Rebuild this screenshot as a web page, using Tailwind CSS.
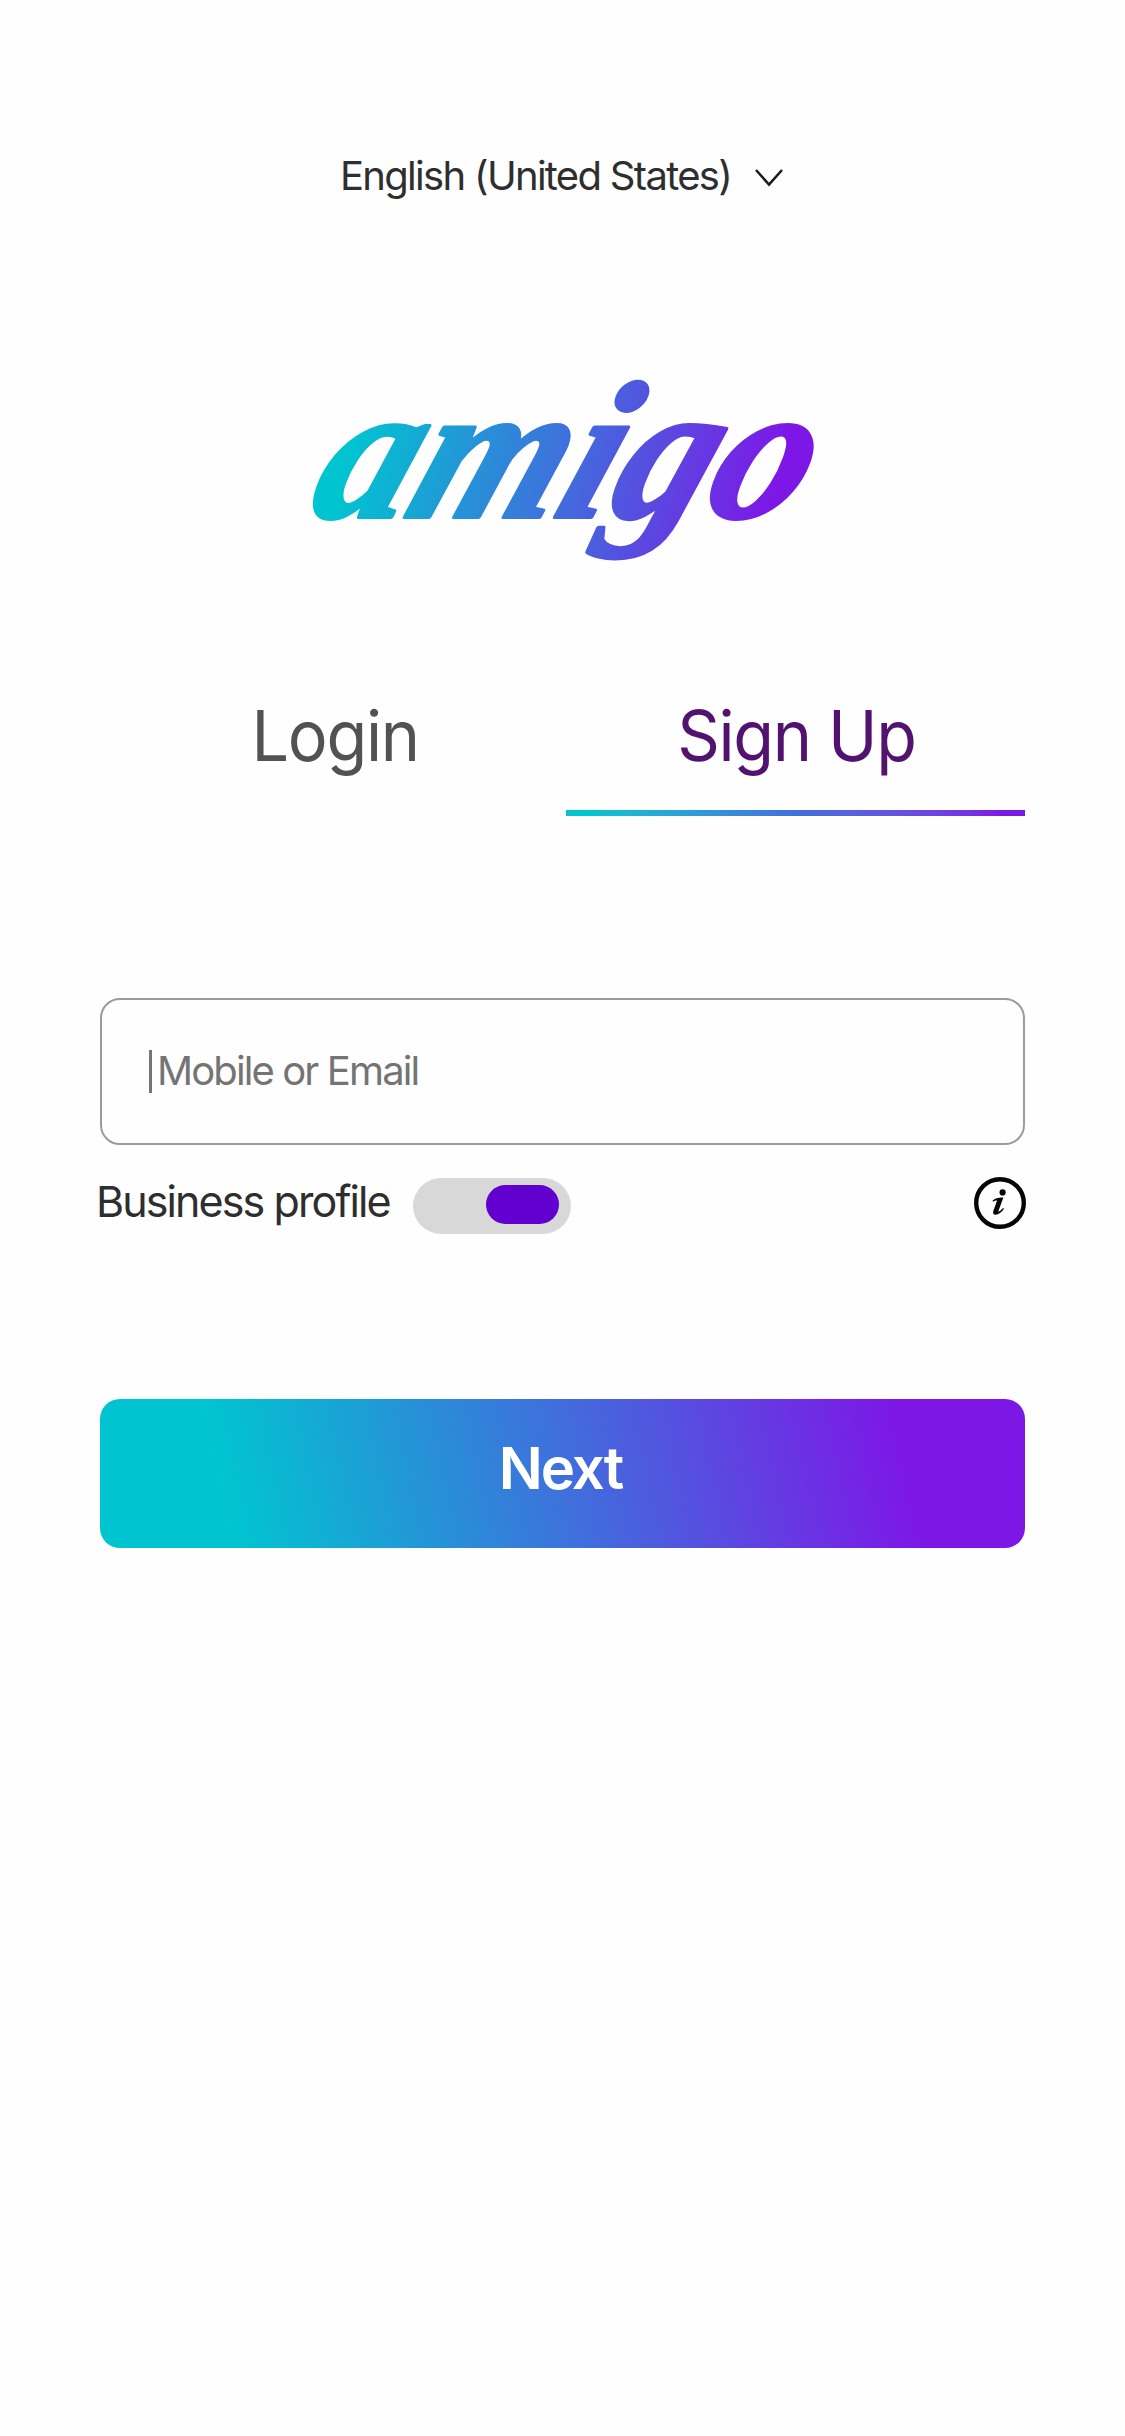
<!DOCTYPE html>
<html lang="en">
<head>
<meta charset="utf-8">
<title>amigo – Sign Up</title>
<script src="https://cdn.jsdelivr.net/npm/@tailwindcss/browser@4"></script>
</head>
<body class="bg-[#fefefe]">
<main class="w-[1125px] h-[2436px] flex flex-col px-[100px] pt-[150px] font-[Inter,sans-serif] text-[#2e2e2e]">
  <button class="self-start ml-[240px] h-[51px] flex items-center whitespace-nowrap">
    <span class="w-[415px] text-left text-[40px] leading-[51px] tracking-[-1.7px]">English (United States)</span>
    <svg class="w-[28px] h-[18px] mt-[5px]" viewBox="0 0 28 18" fill="none" stroke="#1c1c1c" stroke-width="2.6"><path d="M1 1 L14 15.5 L27 1"/></svg>
  </button>

  <svg class="self-start ml-[200px] mt-[179px] w-[530px] h-[220px] overflow-visible" viewBox="0 0 530 220" role="img" aria-label="amigo">
    <defs>
      <linearGradient id="brand" gradientUnits="userSpaceOnUse" x1="52" y1="150" x2="542" y2="80">
        <stop offset="0.06" stop-color="#00c5d0"/>
        <stop offset="0.5" stop-color="#3f70dc"/>
        <stop offset="0.94" stop-color="#7d17e6"/>
      </linearGradient>
    </defs>
    <text x="55" y="137" transform="skewX(-20)" textLength="490" lengthAdjust="spacingAndGlyphs" font-family="Liberation Serif, serif" font-style="italic" font-weight="700" font-size="195" fill="url(#brand)" stroke="url(#brand)" stroke-width="4" stroke-linejoin="round">amigo</text>
  </svg>

  <nav class="mt-[90px] h-[126px] grid grid-cols-[459px_459px] gap-[7px] text-[70px] leading-[91px] text-center whitespace-nowrap">
    <a class="block pl-[12px] text-[#525252] tracking-[-1.3px]"><span class="inline-block scale-x-95">Login</span></a>
    <a class="flex flex-col justify-between text-[#51136f] tracking-[-1.4px]"><span class="inline-block pl-[2px] scale-x-95">Sign Up</span><span class="block h-[6px] bg-linear-to-r from-[#00c5d0] from-5% via-[#3f70dc] via-50% to-[#7d17e6] to-95%"></span></a>
  </nav>

  <div class="mt-[182px] h-[147px] flex items-center rounded-[20px] border-2 border-[#9b9b9b] px-[47px] pb-px text-[#747474]">
    <span class="w-[3px] h-[43px] bg-[#747474]"></span>
    <span class="ml-[5px] -mt-px text-[40px] leading-[48px] tracking-[-1.9px]">Mobile or Email</span>
  </div>

  <div class="mt-[32px] h-[57px] -ml-[4px] -mr-px flex items-start">
    <span class="w-[317px] text-[43px] leading-[49px] tracking-[-1.9px] whitespace-nowrap">Business profile</span>
    <span class="w-[158px] h-[56px] mt-px rounded-[28px] bg-[#d8d8d8] flex justify-end pr-[12px] pt-[7px]"><span class="w-[73px] h-[39px] rounded-[20px] bg-[#6200d0]"></span></span>
    <svg class="ml-auto w-[52px] h-[52px]" viewBox="0 0 52 52"><circle cx="26" cy="26" r="23.8" fill="none" stroke="#050505" stroke-width="4.4"/><circle cx="28.6" cy="15.4" r="3.1" fill="#050505"/><path d="M18.5 23.8 C21 21 23.5 20.6 29.4 20.4 L24.2 34.6 C25.5 34.5 27.5 32.8 29 31 L30 31.8 C27.5 35.3 24.6 37.8 21.6 37.8 C19.2 37.8 18.6 36 19.4 33.8 L23 23.8 C22 23.3 20.6 23.8 19.2 24.8 Z" fill="#050505"/></svg>
  </div>

  <button class="mt-[165px] h-[149px] rounded-[20px] bg-[linear-gradient(77.5deg,#00c5d0_14%,#3f70dc_50%,#7d17e6_86%)] text-white font-semibold text-[58px] leading-[149px] tracking-[-2px] pb-[10px] pr-[4px] flex items-center justify-center"><span>Next</span></button>
</main>
</body>
</html>
